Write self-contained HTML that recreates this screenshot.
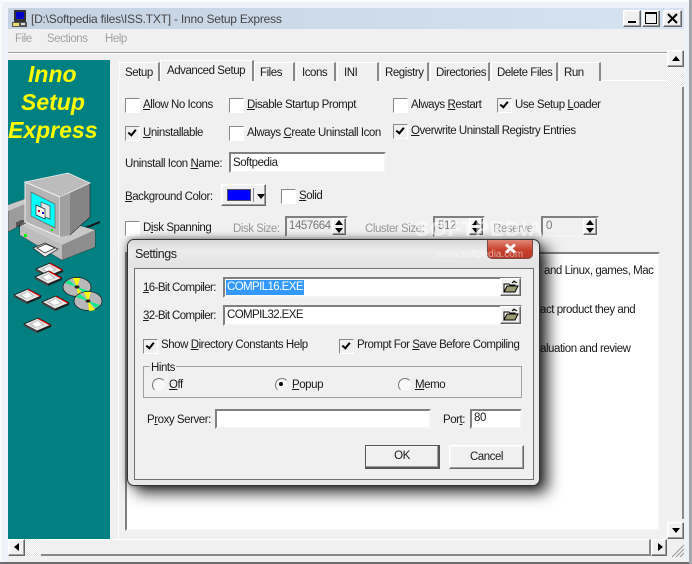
<!DOCTYPE html>
<html><head><meta charset="utf-8">
<style>
html,body{margin:0;padding:0}
body{width:692px;height:564px;overflow:hidden;position:relative;background:#f0f0f0;font:11.5px/14px "Liberation Sans",sans-serif;letter-spacing:-.45px;color:#1a1a1a}
div,span.t{position:absolute;box-sizing:border-box}
.t{white-space:nowrap}
body>.t{margin-top:1px}
.g{color:#979797}
.cb{position:absolute;width:13px;height:13px;background:#fff;border:1px solid;border-color:#888 #fff #fff #888}
.cb.c::after{content:"";position:absolute;left:2px;top:1px;width:6px;height:3px;border:solid #000;border-width:0 0 2px 2px;transform:rotate(-50deg) translate(-1px,1px)}
.cb.c{background:#f0f0f0}
.in{background:#fff;border:2px solid;border-color:#808080 #f4f4f4 #f4f4f4 #808080}
.btn{background:#f0f0f0;border:1px solid;border-color:#fff #666 #666 #fff;box-shadow:inset -1px -1px 0 #a0a0a0,inset 1px 1px 0 #f8f8f8}
.tab{background:#f0f0f0;border-right:2px solid #888;border-left:1px solid #fff;border-top:1px solid #fff;height:19px;top:62px;padding:3px 0 0 5px;white-space:nowrap}
.dith{background-color:#fff;background-image:linear-gradient(45deg,#e4e4e4 25%,transparent 25%,transparent 75%,#e4e4e4 75%),linear-gradient(45deg,#e4e4e4 25%,transparent 25%,transparent 75%,#e4e4e4 75%);background-size:2px 2px;background-position:0 0,1px 1px}
.up{border-bottom:5px solid #000;border-left:4px solid transparent;border-right:4px solid transparent;width:0;height:0}
.dn{border-top:5px solid #000;border-left:4px solid transparent;border-right:4px solid transparent;width:0;height:0}
.rd{position:absolute;width:12px;height:12px;border-radius:50%;background:#f8f8f8;border:1px solid;border-color:#777 #eee #eee #777}
u{text-decoration:underline}
</style></head><body>

<!-- outer frame -->
<div style="left:0;top:0;width:692px;height:564px;background:#eef2f8"></div>
<div style="left:0;top:0;width:692px;height:2px;background:#fbfcfe"></div>
<div style="left:0;top:0;width:2px;height:564px;background:#f8f9fb"></div>
<div style="left:0;top:562px;width:692px;height:2px;background:#6d6d6d"></div>
<div style="left:689px;top:0;width:3px;height:564px;background:#a4a7ab"></div>
<div style="left:8px;top:8px;width:676px;height:553px;background:#f0f0f0"></div>
<!-- title bar -->
<div style="left:8px;top:8px;width:676px;height:21px;background:linear-gradient(90deg,#c5d2e2,#d5e3f2)"></div>
<svg style="position:absolute;left:11px;top:10px" width="17" height="17"><rect x="3" y="0" width="12" height="12" fill="#333"/><rect x="5" y="2" width="8" height="7" fill="#0000c8"/><rect x="1" y="12" width="15" height="5" fill="#555"/><rect x="2" y="13" width="6" height="3" fill="#e8dc70"/><rect x="10" y="13" width="4" height="2" fill="#ddd"/></svg>
<span class="t" style="position:absolute;left:31px;top:12px;margin-top:0;font-size:12px;letter-spacing:-.22px;color:#444">[D:\Softpedia files\ISS.TXT] - Inno Setup Express</span>
<div class="btn" style="left:623px;top:10px;width:18px;height:17px"><div style="left:4px;top:10px;width:8px;height:2px;background:#000"></div></div>
<div class="btn" style="left:642px;top:10px;width:18px;height:17px"><div style="left:2px;top:1px;width:12px;height:12px;border:1px solid #000;border-top-width:2px"></div></div>
<div class="btn" style="left:663px;top:10px;width:19px;height:17px"><svg style="position:absolute;left:3px;top:2px" width="12" height="11"><path d="M1 1L10 10M10 1L1 10" stroke="#000" stroke-width="2" fill="none"/></svg></div>
<!-- menu -->
<span class="t g" style="position:absolute;left:15px;top:31px;color:#a2a2a2">File</span>
<span class="t g" style="position:absolute;left:47px;top:31px;color:#a2a2a2">Sections</span>
<span class="t g" style="position:absolute;left:105px;top:31px;color:#a2a2a2">Help</span>
<div style="left:8px;top:52px;width:659px;height:1px;background:#a0a0a0"></div>
<div style="left:8px;top:53px;width:659px;height:1px;background:#fff"></div>

<!-- teal panel -->
<div style="left:8px;top:60px;width:102px;height:479px;background:#008080"></div>
<div style="left:8px;top:60px;width:102px;height:84px;color:#ff0;font:italic bold 23px/28px 'Liberation Sans',sans-serif;letter-spacing:0;text-align:center">
<span class="t" style="position:absolute;left:20px;top:0">Inno</span>
<span class="t" style="position:absolute;left:13px;top:28px">Setup</span>
<span class="t" style="position:absolute;left:0;top:56px">Express</span></div>
<svg style="position:absolute;left:8px;top:170px" width="102" height="180" viewBox="8 170 102 180">
<polygon points="8,205 25,199 25,223 8,232" fill="#9c9c9c" stroke="#333" stroke-width=".5"/>
<polygon points="8,205 25,199 25,204 8,211" fill="#c8c8c8"/>
<line x1="78" y1="231" x2="100" y2="222" stroke="#111" stroke-width="2"/>
<polygon points="20,225 70,223 95,230 95,247 62,260 20,235" fill="#8d8d8d" stroke="#222" stroke-width=".6"/>
<polygon points="20,225 62,245 95,230 70,223 60,237 25,222" fill="#c8c8c8"/>
<polygon points="20,225 62,245 62,260 20,235" fill="#bdbdbd"/>
<polygon points="62,245 95,230 95,247 62,260" fill="#8d8d8d"/>
<path d="M17 222l0 5M19 221l0 6M21 220l0 6M23 220l0 5M25 219l0 5M27 219l0 4" stroke="#111"/>
<polygon points="60,197 90,183 90,217 70,235" fill="#858585" stroke="#222" stroke-width=".6"/>
<polygon points="25,182 68,173 90,183 60,197" fill="#bcbcbc" stroke="#eee" stroke-width=".8"/>
<polygon points="25,182 60,197 60,237 25,222" fill="#b4b4b4" stroke="#eee" stroke-width="1"/>
<polygon points="60,197 60,237 70,235 70,193" fill="#a0a0a0"/>
<polygon points="31,192 55,204 55,228 31,216" fill="#0ff" stroke="#666" stroke-width=".7"/>
<polygon points="41,202 50,206 50,219 41,215" fill="#e8e8e8" stroke="#333" stroke-width=".6"/>
<polygon points="36,205 45,209 45,219 36,215" fill="#fff" stroke="#222" stroke-width=".7"/>
<rect x="38" y="210" width="2" height="2" fill="#c00"/><rect x="42" y="212" width="2" height="2" fill="#00c"/>
<rect x="24" y="234" width="3" height="3" fill="#0f0"/><rect x="51" y="229" width="2" height="2" fill="#0f0"/>
<g stroke="#222" stroke-width=".7"><polygon points="33,248 45,243 58,249 45,257" fill="#e8e8e8"/><polygon points="37,248 46,244 55,248 45,253" fill="#fff"/></g>
<g id="f"><polygon points="36,269 50,263 63,270 49,276" fill="#e8e8e8" stroke="#111" stroke-width=".8"/><path d="M50 263.5L62 270" stroke="#d00" stroke-width="1.2"/><polygon points="40,269 50,265 57,270 47,273" fill="#c4c4c4"/><polygon points="44,269 50,266 54,270 48,272" fill="#fff"/><polygon points="36,269 49,276 49,278 36,271" fill="#444"/><polygon points="49,276 63,270 63,272 49,278" fill="#222"/></g>
<use href="#f" x="-1" y="8"/><use href="#f" x="-22" y="26"/><use href="#f" x="6" y="33"/><use href="#f" x="-12" y="55"/>
<g id="cd"><ellipse cx="77" cy="287" rx="14" ry="9.5" fill="#b8b8b8" stroke="#222" stroke-width=".8"/><polygon points="77,287 73,278 80,278" fill="#ff0"/><polygon points="77,287 65,283 69,280" fill="#0e8"/><polygon points="77,287 84,296 78,297" fill="#ff0"/><polygon points="77,287 89,291 85,294" fill="#0e8"/><ellipse cx="77" cy="287" rx="2.5" ry="1.6" fill="#222"/></g>
<use href="#cd" x="11" y="14"/>
</svg>

<!-- tabs -->
<div style="left:118px;top:80px;width:549px;height:459px;border-left:1px solid #fff;border-top:1px solid #fff"></div>
<div class="tab" style="left:119px;width:41px">Setup</div>
<div class="tab" style="left:160px;top:60px;width:94px;height:21px;padding:3px 0 0 6px;z-index:2;border-right-color:#888">Advanced Setup</div>
<div class="tab" style="left:254px;width:41px">Files</div>
<div class="tab" style="left:296px;width:40px">Icons</div>
<div class="tab" style="left:337px;width:42px;padding-left:6px">INI</div>
<div class="tab" style="left:380px;width:49px;padding-left:4px">Registry</div>
<div class="tab" style="left:430px;width:60px">Directories</div>
<div class="tab" style="left:491px;width:67px">Delete Files</div>
<div class="tab" style="left:559px;width:42px;padding-left:4px">Run</div>

<!-- page 1 -->
<span class="cb" style="left:125px;top:98px"></span><span class="t" style="position:absolute;left:143px;top:97px"><u>A</u>llow No Icons</span>
<span class="cb" style="left:229px;top:98px"></span><span class="t" style="position:absolute;left:247px;top:97px"><u>D</u>isable Startup Prompt</span>
<span class="cb" style="left:393px;top:98px"></span><span class="t" style="position:absolute;left:411px;top:97px">Always <u>R</u>estart</span>
<span class="cb c" style="left:497px;top:98px"></span><span class="t" style="position:absolute;left:515px;top:97px">Use Setup <u>L</u>oader</span>
<span class="cb c" style="left:125px;top:126px"></span><span class="t" style="position:absolute;left:143px;top:125px"><u>U</u>ninstallable</span>
<span class="cb" style="left:229px;top:126px"></span><span class="t" style="position:absolute;left:247px;top:125px">Always <u>C</u>reate Uninstall Icon</span>
<span class="cb c" style="left:393px;top:124px"></span><span class="t" style="position:absolute;left:411px;top:123px"><u>O</u>verwrite Uninstall Registry Entries</span>
<span class="t" style="position:absolute;left:125px;top:156px">Uninstall Icon <u>N</u>ame:</span>
<div class="in" style="left:229px;top:152px;width:157px;height:21px;padding:2px 0 0 2px">Softpedia</div>
<span class="t" style="position:absolute;left:125px;top:189px"><u>B</u>ackground Color:</span>
<div class="btn" style="left:221px;top:184px;width:45px;height:22px"><div style="left:5px;top:4px;width:24px;height:12px;background:#00f;border:1px solid #555"></div><div style="left:31px;top:3px;width:1px;height:14px;background:#888"></div><div class="dn" style="left:35px;top:9px"></div></div>
<span class="cb" style="left:281px;top:189px"></span><span class="t" style="position:absolute;left:299px;top:188px"><u>S</u>olid</span>
<span class="cb" style="left:125px;top:221px"></span><span class="t" style="position:absolute;left:143px;top:220px">D<u>i</u>sk Spanning</span>
<span class="t g" style="position:absolute;left:233px;top:221px">Disk Size:</span>
<div class="in" style="left:285px;top:216px;width:63px;height:21px;background:#f0f0f0;color:#777;padding:1px 0 0 2px">1457664</div>
<div class="btn" style="left:332px;top:218px;width:14px;height:17px"><div class="up" style="left:2px;top:1px"></div><div class="dn" style="left:2px;top:9px"></div></div>
<span class="t g" style="position:absolute;left:365px;top:221px">Cluster Size:</span>
<div class="in" style="left:433px;top:216px;width:52px;height:21px;background:#f0f0f0;color:#777;padding:1px 0 0 3px">512</div>
<div class="btn" style="left:469px;top:218px;width:14px;height:17px"><div class="up" style="left:2px;top:1px"></div><div class="dn" style="left:2px;top:9px"></div></div>
<span class="t g" style="position:absolute;left:493px;top:221px">Reserve:</span>
<div class="in" style="left:541px;top:216px;width:58px;height:21px;background:#f0f0f0;color:#777;padding:1px 0 0 3px">0</div>
<div class="btn" style="left:583px;top:218px;width:14px;height:17px"><div class="up" style="left:2px;top:1px"></div><div class="dn" style="left:2px;top:9px"></div></div>

<!-- memo -->
<div class="in" style="left:125px;top:252px;width:535px;height:279px"></div>
<span class="t" style="position:absolute;left:544px;top:263px">and Linux, games, Mac</span>
<span class="t" style="position:absolute;left:540px;top:302px">act product they and</span>
<span class="t" style="position:absolute;left:540px;top:341px">aluation and review</span>

<!-- scrollbars -->
<div style="left:667px;top:50px;width:17px;height:489px;background:#f0f0f0;border-right:2px solid #888"></div>
<div class="btn" style="left:667px;top:50px;width:17px;height:17px"><div class="up" style="left:4px;top:5px"></div></div>
<div class="dith" style="left:667px;top:67px;width:17px;height:20px"></div>
<div class="dith" style="left:667px;top:519px;width:17px;height:3px"></div>
<div class="btn" style="left:667px;top:522px;width:17px;height:17px"><div class="dn" style="left:4px;top:5px"></div></div>
<div style="left:8px;top:539px;width:643px;height:17px;background:#f0f0f0;border-bottom:2px solid #888;border-right:2px solid #888;border-top:1px solid #fff"></div>
<div class="btn" style="left:8px;top:539px;width:17px;height:17px"><div style="left:5px;top:3px;width:0;height:0;border-right:5px solid #000;border-top:4px solid transparent;border-bottom:4px solid transparent"></div></div>
<div class="dith" style="left:25px;top:539px;width:16px;height:17px"></div>
<div class="btn" style="left:651px;top:539px;width:16px;height:17px"><div style="left:6px;top:3px;width:0;height:0;border-left:5px solid #000;border-top:4px solid transparent;border-bottom:4px solid transparent"></div></div>
<svg style="position:absolute;left:672px;top:544px" width="14" height="14"><path d="M0 13L12 1M4 13L12 5M8 13L12 9" stroke="#999" fill="none"/></svg>

<!-- watermark -->
<span class="t" style="position:absolute;left:415px;top:217px;font:bold 21px/24px 'Liberation Sans',sans-serif;letter-spacing:1px;color:rgba(255,255,255,.55);z-index:20">SOFTPEDIA</span>

<!-- dialog -->
<div style="left:127px;top:239px;width:413px;height:247px;background:#e9e9e9;border:1px solid #333;border-radius:7px;box-shadow:8px 7px 15px rgba(0,0,0,.8),0 0 7px rgba(0,0,0,.45);z-index:5">
 <div style="left:0;top:0;width:411px;height:28px;border-radius:6px 6px 0 0;background:linear-gradient(180deg,#d8d8d8,#ececec 40%,#e2e2e2)"></div>
 <span class="t" style="position:absolute;left:7px;top:7px;font-size:12.5px;color:#222">Settings</span>
 <div style="left:359px;top:0;width:46px;height:19px;border-radius:0 0 5px 5px;background:linear-gradient(180deg,#e08878,#c9402c 55%,#b83a28);border:1px solid #7a4a44;border-top:0"><svg style="position:absolute;left:16px;top:3px" width="13" height="11"><path d="M2 1.5L11 9.5M11 1.5L2 9.5" stroke="#f4f4f4" stroke-width="3" fill="none"/></svg></div>
 <div style="left:6px;top:28px;width:400px;height:212px;background:#f0f0f0;border:1px solid #707070"></div>
</div>
<div style="left:0;top:0;width:692px;height:564px;z-index:6">
<span class="t" style="position:absolute;left:143px;top:281px;letter-spacing:-.6px"><u>1</u>6-Bit Compiler:</span>
<div class="in" style="left:223px;top:277px;width:299px;height:21px;letter-spacing:-.6px"><span class="t" style="position:absolute;left:1px;top:1px;background:#3399ff;color:#fff;padding:0 1px 0 1px;height:15px">COMPIL16.EXE</span></div>
<div class="btn" style="left:500px;top:278px;width:21px;height:18px"><svg style="position:absolute;left:2px;top:1px" width="16" height="14"><path d="M1 12V4h5l1 1h5v2z" fill="#fff" stroke="#000"/><path d="M1 12l3-6h11l-3 6zM9 3l2-2 3 2" fill="#9a9a70" stroke="#000"/></svg></div>
<span class="t" style="position:absolute;left:143px;top:309px;letter-spacing:-.6px"><u>3</u>2-Bit Compiler:</span>
<div class="in" style="left:223px;top:305px;width:299px;height:21px;padding:1px 0 0 2px;letter-spacing:-.6px">COMPIL32.EXE</div>
<div class="btn" style="left:500px;top:306px;width:21px;height:18px"><svg style="position:absolute;left:2px;top:1px" width="16" height="14"><path d="M1 12V4h5l1 1h5v2z" fill="#fff" stroke="#000"/><path d="M1 12l3-6h11l-3 6zM9 3l2-2 3 2" fill="#9a9a70" stroke="#000"/></svg></div>
<span class="cb c" style="left:143px;top:339px"></span><span class="t" style="position:absolute;left:161px;top:338px">Show <u>D</u>irectory Constants Help</span>
<span class="cb c" style="left:339px;top:339px"></span><span class="t" style="position:absolute;left:357px;top:338px;letter-spacing:-.5px">Prompt For <u>S</u>ave Before Compiling</span>
<div style="left:143px;top:366px;width:379px;height:32px;border:1px solid #a0a0a0"></div>
<span class="t" style="position:absolute;left:150px;top:361px;background:#f0f0f0;padding:0 1px">Hints</span>
<span class="rd" style="left:152px;top:378px"></span><span class="t" style="position:absolute;left:169px;top:378px"><u>O</u>ff</span>
<span class="rd" style="left:275px;top:378px"></span><div style="left:279px;top:382px;width:4px;height:4px;border-radius:50%;background:#000"></div><span class="t" style="position:absolute;left:292px;top:378px"><u>P</u>opup</span>
<span class="rd" style="left:398px;top:378px"></span><span class="t" style="position:absolute;left:415px;top:378px"><u>M</u>emo</span>
<span class="t" style="position:absolute;left:147px;top:413px">P<u>r</u>oxy Server:</span>
<div class="in" style="left:215px;top:409px;width:216px;height:20px"></div>
<span class="t" style="position:absolute;left:443px;top:413px">Por<u>t</u>:</span>
<div class="in" style="left:470px;top:409px;width:52px;height:20px;padding:0 0 0 2px">80</div>
<div class="btn" style="left:365px;top:445px;width:75px;height:24px;border:1px solid #555;border-width:1px 2px 2px 1px;text-align:center;line-height:21px">OK</div>
<div class="btn" style="left:449px;top:445px;width:75px;height:24px;text-align:center;line-height:22px">Cancel</div>
<span class="t" style="position:absolute;left:437px;top:248px;font-size:10px;letter-spacing:0;color:rgba(255,255,255,.55)">www.softpedia.com</span>
</div>
</body></html>
